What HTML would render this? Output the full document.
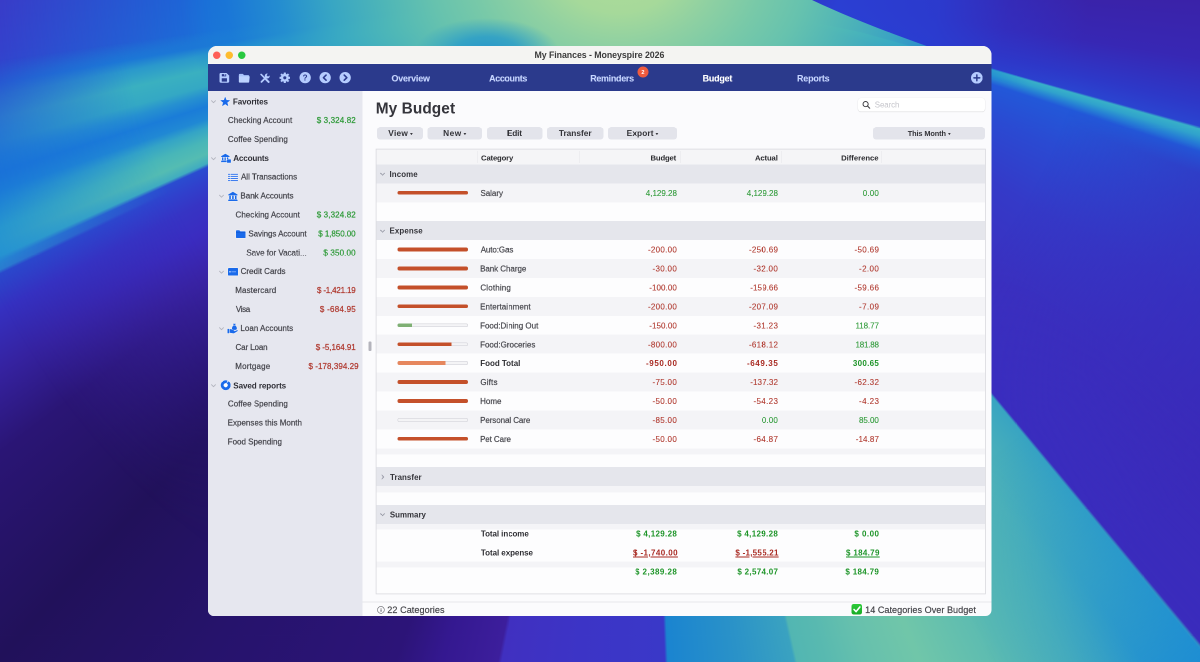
<!DOCTYPE html><html lang="en"><head><meta charset="utf-8"><title>My Finances - Moneyspire 2026</title><style>
*{box-sizing:border-box;margin:0;padding:0}
html,body{width:1200px;height:662px;overflow:hidden}
body{position:relative;font-family:"Liberation Sans",sans-serif;background:#3a30c0}
#stage{position:absolute;left:0;top:0;width:2400px;height:1324px;transform:scale(.5);transform-origin:0 0;will-change:transform;overflow:hidden}
#z{position:absolute;left:0;top:0;width:1200px;height:662px;zoom:2;overflow:hidden}
#bg,#bg2,#bg3,#bg4,#bg5,#bg6,#bg7{position:absolute;left:0;top:0;width:1200px;height:662px}

#bg{background:conic-gradient(from 0deg at 640px -30px,
 #3a22a8 0deg,#3a22a8 93deg,#3727b4 99deg,#2d38c8 103.5deg,#2a44d0 105.6deg,
 #38b0c8 105.85deg,#30a2cc 106.5deg,#2680d4 107.2deg,#2258d8 108deg,#2a4ad2 113deg,#343ac8 121deg,#3a30c0 131deg,#3a2ec0 140.2deg,
 #38a4c2 140.45deg,#44acbc 143deg,#50b4b6 146deg,#5abab2 152deg,#70c6a9 158deg,#66c0ad 162deg,#58b9b0 165deg,#52b6b2 167.2deg,
 #3aa2c0 167.45deg,#2a92c8 172deg,#1a84d0 177.7deg,
 #3a38c8 177.95deg,#3c34c6 185deg,#4030c0 191.3deg,
 #3c1e9c 191.6deg,#341890 196deg,#2c1478 199.5deg,#26136c 212deg,#21115a 223deg,
 #2a1575 233deg,#3522a0 238deg,#3530c0 242deg,#2a48cc 244.6deg,
 #2a80d0 244.9deg,#2290d4 246deg,#2090d4 248deg,#1a7cd8 250deg,#1a70d8 252deg,#1a6cd8 253.5deg,#2060d8 256deg,#2a4cd0 259deg,#3540cc 263deg,#3a3ac8 267.3deg,#3a3ac8 360deg)}
#bg2{background:conic-gradient(from 0deg at 640px -30px,
 transparent 0deg,transparent 215deg,
 #2a1678 225deg,#3a24a8 235deg,#3a2cc0 239deg,#3634c4 242deg,#3040cc 244deg,#2a4cd0 245.5deg,
 #40acc0 245.9deg,#54bcb2 247deg,#48b6b8 248.5deg,#34a4c6 250deg,#2088d4 251deg,#1a7cd8 252.5deg,#2690d0 253.9deg,#34a8c4 255deg,#3ab0c0 257deg,#2a98cc 258.9deg,#1c78d6 260deg,rgba(26,112,216,0) 262deg,transparent 276deg);
 -webkit-mask-image:radial-gradient(circle at 640px -30px,#000 0,#000 520px,transparent 720px);
 mask-image:radial-gradient(circle at 640px -30px,#000 0,#000 520px,transparent 720px)}
#bg4{background:radial-gradient(circle at 640px -30px,rgba(42,68,212,0) 0,rgba(42,68,212,0) 120px,rgba(42,64,212,.95) 200px,rgba(42,60,208,.9) 300px,rgba(46,52,200,.45) 370px,rgba(58,40,180,0) 450px);
 clip-path:polygon(700px -10px,1210px -10px,1210px 131px,991px 68px,900px 40px,700px 0px)}
#bg3{background:radial-gradient(ellipse 72px 34px at 487px 52px,rgba(34,146,206,.92) 0,rgba(38,154,202,.8) 45%,rgba(60,170,190,0) 100%),radial-gradient(ellipse 440px 330px at 618px -30px,#aedb98 0,#a6d99a 13%,#8ed0a2 23%,#78c9a8 33%,#66c2ae 43%,rgba(80,184,182,.97) 54%,rgba(58,170,194,.93) 66%,rgba(38,148,206,.8) 78%,rgba(26,128,214,.45) 90%,rgba(26,110,216,0) 100%);
 clip-path:path('M -10 -10 L 806 -10 L 812 0 C 850 18 890 33 921 44 C 950 54 970 61 991 68 L 1210 131 L 1210 143 L 991 78 L 900 56 L 900 300 L -10 300 Z')}

#bg5{background:conic-gradient(from 0deg at 640px -30px,transparent 0deg,transparent 257deg,rgba(28,120,214,0) 258.5deg,#1c78d6 260.5deg,#1a70d8 262deg,#1a6ad8 267deg,#1a6ad8 275deg,transparent 276deg);
 -webkit-mask-image:radial-gradient(circle at 640px -30px,#000 0,#000 430px,transparent 650px);
 mask-image:radial-gradient(circle at 640px -30px,#000 0,#000 430px,transparent 650px)}

#bg6{background:radial-gradient(circle at 640px -30px,rgba(30,146,210,0) 0,rgba(30,146,210,0) 600px,rgba(28,142,212,.5) 760px,rgba(24,136,214,.9) 920px);
 -webkit-mask-image:conic-gradient(from 0deg at 640px -30px,transparent 0deg,transparent 140.3deg,#000 140.5deg,#000 144deg,rgba(0,0,0,.45) 148deg,transparent 153deg,transparent 360deg);
 mask-image:conic-gradient(from 0deg at 640px -30px,transparent 0deg,transparent 140.3deg,#000 140.5deg,#000 144deg,rgba(0,0,0,.45) 148deg,transparent 153deg,transparent 360deg)}

#bg7{background:radial-gradient(circle at 640px -30px,rgba(58,40,184,0) 0,rgba(58,40,184,0) 450px,rgba(58,40,184,.5) 600px,rgba(58,38,180,.7) 760px);
 -webkit-mask-image:conic-gradient(from 0deg at 640px -30px,transparent 0deg,transparent 107.6deg,#000 110deg,#000 128deg,rgba(0,0,0,.4) 140.2deg,transparent 140.3deg,transparent 360deg);
 mask-image:conic-gradient(from 0deg at 640px -30px,transparent 0deg,transparent 107.6deg,#000 110deg,#000 128deg,rgba(0,0,0,.4) 140.2deg,transparent 140.3deg,transparent 360deg)}

#win{position:absolute;left:208px;top:46px;width:783.5px;height:569.8px;border-radius:9px 9px 6px 6px;overflow:hidden;background:#fbfbfd}
#in{position:absolute;left:-208px;top:-46px;width:1200px;height:662px}
#tb{position:absolute;left:208px;top:46px;width:784px;height:18.3px;background:#f4f4f2}
#nav{position:absolute;left:208px;top:64.2px;width:784px;height:26.9px;background:#2b3a8c}
#side{position:absolute;left:208px;top:91px;width:154.5px;height:530px;background:#e6e7ef}
.t{position:absolute;white-space:nowrap;line-height:1;transform:translateY(-50%)}
.b{font-weight:bold}
.dot{position:absolute;border-radius:50%}
.nv{font-size:8.9px;font-weight:bold;color:#c6d5ff;-webkit-text-stroke:.12px}
.sb{font-size:8px;color:#45454c;-webkit-text-stroke:.2px}
.sh{font-size:8.1px;font-weight:bold;color:#2f2f36}
.am{font-size:8px;-webkit-text-stroke:.22px}
.btn{position:absolute;height:12.4px;background:#e3e4eb;border-radius:3px}
.bt{font-size:8.3px;font-weight:bold;color:#333338}
.row{position:absolute;left:376.3px;width:608.6px}
.cell{font-size:8px;color:#47474d;-webkit-text-stroke:.18px}
.cb{font-size:8px;font-weight:bold;color:#2e2e33}
.hd{font-size:7.7px;font-weight:bold;color:#2c2c30}
.bar{position:absolute;height:3.8px;border-radius:2px;overflow:hidden;background:#f4f4f6;box-shadow:inset 0 0 0 .6px #d4d4da}
.bar i{position:absolute;left:0;top:0;height:100%;display:block}
.chev{position:absolute;width:6px;height:6px}
.ic{position:absolute}
.g{color:#2e9a38}.rd{color:#b0392f}
.cell.g,.cell.rd{-webkit-text-stroke:.1px}
.cb.g{color:#1d9428}.cb.rd{color:#a82a22}
</style></head><body>
<div id="stage"><div id="z">
<div id="bg"></div><div id="bg5"></div><div id="bg2"></div><div id="bg4"></div><div id="bg3"></div><div id="bg6"></div><div id="bg7"></div>
<div id="win"><div id="in">
<div id="tb"></div><div style="position:absolute;left:208px;top:63.5px;width:784px;height:.7px;background:#fbfbfa"></div>
<div class="dot" style="left:212.95px;top:51.45px;width:7.5px;height:7.5px;background:#fe5f57"></div>
<div class="dot" style="left:225.45px;top:51.45px;width:7.5px;height:7.5px;background:#febc2e"></div>
<div class="dot" style="left:238.05px;top:51.45px;width:7.5px;height:7.5px;background:#28c840"></div>
<div class="t b" style="left:534.45px;letter-spacing:-0.057px;top:55.6px;font-size:8.8px;color:#3b3b3b">My Finances - Moneyspire 2026</div>
<div id="nav"></div>
<svg class="ic" style="left:219.60px;top:73.15px;width:9.7px;height:9.7px" viewBox="0 0 10 10"><path d="M1.3 0 H7.3 L10 2.7 V8.7 Q10 10 8.7 10 H1.3 Q0 10 0 8.7 V1.3 Q0 0 1.3 0Z" fill="#b5ccff"/><path d="M2.4 1.1 H6.9 V3.5 H2.4Z" fill="#2b3a8c"/><rect x="4.9" y="1.1" width="1.1" height="1.7" fill="#b5ccff"/><path d="M2.3 5.4 H7.7 V8.9 H2.3Z" fill="#2b3a8c"/></svg>
<svg class="ic" style="left:238.70px;top:73.40px;width:11.4px;height:9.4px" viewBox="0 0 12 10"><path d="M.3 1.4 Q.3 .4 1.3 .4 H4.6 L5.8 1.7 H10.4 Q11.3 1.7 11.3 2.6 V3.4 H.3Z" fill="#a9c3fb"/><path d="M.3 3 H11.4 Q11.9 3 11.85 3.5 L11.3 8.9 Q11.2 9.7 10.4 9.7 H1.3 Q.4 9.7 .3 8.9Z" fill="#bdd3ff"/></svg>
<svg class="ic" style="left:259.90px;top:73.30px;width:9.9px;height:9.6px" viewBox="0 0 10 10"><path d="M1 1 L4.4 4.4" stroke="#b5ccff" stroke-width="1.7" stroke-linecap="round"/><path d="M5.9 5.9 L8.8 8.8" stroke="#b5ccff" stroke-width="2.1" stroke-linecap="round"/><path d="M1.4 8.7 L6.8 3.3" stroke="#b5ccff" stroke-width="1.9" stroke-linecap="round"/><path d="M9.9 2.1 A2.6 2.6 0 1 1 7.9 .1 L6.7 1.9 L8.1 3.3Z" fill="#b5ccff"/></svg>
<svg class="ic" style="left:279.50px;top:72.50px;width:10.6px;height:10.6px" viewBox="0 0 12 12"><path d="M5.08 0.17 L6.92 0.17 L7.00 1.82 L8.25 2.33 L9.47 1.23 L10.77 2.53 L9.67 3.75 L10.18 5.00 L11.83 5.08 L11.83 6.92 L10.18 7.00 L9.67 8.25 L10.77 9.47 L9.47 10.77 L8.25 9.67 L7.00 10.18 L6.92 11.83 L5.08 11.83 L5.00 10.18 L3.75 9.67 L2.53 10.77 L1.23 9.47 L2.33 8.25 L1.82 7.00 L0.17 6.92 L0.17 5.08 L1.82 5.00 L2.33 3.75 L1.23 2.53 L2.53 1.23 L3.75 2.33 L5.00 1.82Z" fill="#b5ccff" stroke="#b5ccff" stroke-width=".5" stroke-linejoin="round"/><circle cx="6" cy="6" r="1.75" fill="#2b3a8c"/></svg>
<svg class="ic" style="left:299.55px;top:72.10px;width:11.3px;height:11.3px" viewBox="0 0 12 12"><circle cx="6" cy="6" r="6" fill="#b5ccff"/><text x="6" y="9.1" text-anchor="middle" font-family="Liberation Sans,sans-serif" font-weight="bold" font-size="8.6" fill="#2b3a8c">?</text></svg>
<svg class="ic" style="left:319.55px;top:72.10px;width:11.3px;height:11.3px" viewBox="0 0 12 12"><circle cx="6" cy="6" r="6" fill="#b5ccff"/><path d="M7 3.3 L4.2 6 L7 8.7" fill="none" stroke="#2b3a8c" stroke-width="1.7" stroke-linecap="round" stroke-linejoin="round"/></svg>
<svg class="ic" style="left:339.65px;top:72.10px;width:11.3px;height:11.3px" viewBox="0 0 12 12"><circle cx="6" cy="6" r="6" fill="#b5ccff"/><path d="M5 3.3 L7.8 6 L5 8.7" fill="none" stroke="#2b3a8c" stroke-width="1.7" stroke-linecap="round" stroke-linejoin="round"/></svg>
<svg class="ic" style="left:970.95px;top:72.05px;width:11.7px;height:11.7px" viewBox="0 0 12 12"><circle cx="6" cy="6" r="6" fill="#b5ccff"/><path d="M6 3 V9 M3 6 H9" stroke="#2b3a8c" stroke-width="1.5" stroke-linecap="round"/></svg>
<div class="t nv" style="left:391.47px;letter-spacing:-0.155px;top:79.1px;">Overview</div>
<div class="t nv" style="left:489.11px;letter-spacing:-0.329px;top:79.1px;">Accounts</div>
<div class="t nv" style="left:590.19px;letter-spacing:-0.260px;top:79.1px;">Reminders</div>
<div class="t nv" style="left:702.64px;letter-spacing:-0.190px;top:79.1px;color:#fff">Budget</div>
<div class="t nv" style="left:797.04px;letter-spacing:-0.168px;top:79.1px;">Reports</div>
<div class="dot" style="left:637.4px;top:66.4px;width:11.2px;height:11.2px;background:#ee5b3e"></div>
<div class="t b" style="left:641.43px;top:72.3px;font-size:5.6px;color:#fff">2</div>
<div id="side"></div>
<div style="position:absolute;left:368.3px;top:341.7px;width:3.2px;height:9.3px;background:#b4b4bc;border-radius:1px"></div>
<svg class="chev" style="left:210.70px;top:98.60px" viewBox="0 0 6 6"><path d="M1 2.2 L3 4.2 L5 2.2" fill="none" stroke="#b2b4be" stroke-width=".9" stroke-linecap="round" stroke-linejoin="round"/></svg>
<svg class="ic" style="left:220.70px;top:97.20px;width:9.4px;height:9.4px;filter:drop-shadow(0 0 .8px rgba(255,255,255,.9))" viewBox="0 0 10 10"><path d="M5.00 0.25 L6.26 3.51 L9.76 3.70 L7.04 5.91 L7.94 9.30 L5.00 7.40 L2.06 9.30 L2.96 5.91 L0.24 3.70 L3.74 3.51Z" fill="#1a6aea" stroke="#1a6aea" stroke-width=".5" stroke-linejoin="round"/></svg>
<div class="t sh" style="left:232.89px;letter-spacing:-0.110px;top:101.4px;">Favorites</div>
<div class="t sb" style="left:227.93px;letter-spacing:0.018px;top:120.32px;">Checking Account</div>
<div class="t am g" style="left:316.70px;letter-spacing:0.135px;top:120.32px;">$ 3,324.82</div>
<div class="t sb" style="left:227.93px;letter-spacing:0.033px;top:139.25px;">Coffee Spending</div>
<svg class="chev" style="left:210.70px;top:155.38px" viewBox="0 0 6 6"><path d="M1 2.2 L3 4.2 L5 2.2" fill="none" stroke="#b2b4be" stroke-width=".9" stroke-linecap="round" stroke-linejoin="round"/></svg>
<svg class="ic" style="left:220.80px;top:153.67px;width:10px;height:9.4px;filter:drop-shadow(0 0 .8px rgba(255,255,255,.9))" viewBox="0 0 10.6 10"><path d="M4.6 .3 L9 2.8 V3.7 H.2 V2.8Z" fill="#1a6aea"/><path d="M1.1 4.1 H2.5 V7 H1.1Z M3.7 4.1 H5.1 V7 H3.7Z M6.3 4.1 H7.7 V6 H6.3Z" fill="#1a6aea"/><path d="M.5 7.4 H6 V8.2 H6 V9.2 H0 V8.2 H.5Z" fill="#1a6aea"/><rect x="6.4" y="6.3" width="4.1" height="3.6" rx=".5" fill="#1a6aea"/></svg>
<div class="t sh" style="left:233.27px;letter-spacing:-0.179px;top:158.17px;">Accounts</div>
<svg class="ic" style="left:228.00px;top:173.70px;width:10px;height:7.6px;filter:drop-shadow(0 0 .8px rgba(255,255,255,.9))" viewBox="0 0 10 7.7"><rect x="0" y="0.35" width="1.9" height="1.0" fill="#3577ee"/><rect x="2.5" y="0.35" width="7.5" height="1.0" fill="#3577ee"/><rect x="0" y="2.45" width="1.9" height="1.0" fill="#3577ee"/><rect x="2.5" y="2.45" width="7.5" height="1.0" fill="#3577ee"/><rect x="0" y="4.55" width="1.9" height="1.0" fill="#3577ee"/><rect x="2.5" y="4.55" width="7.5" height="1.0" fill="#3577ee"/><rect x="0" y="6.65" width="1.9" height="1.0" fill="#3577ee"/><rect x="2.5" y="6.65" width="7.5" height="1.0" fill="#3577ee"/></svg>
<div class="t sb" style="left:241.00px;letter-spacing:-0.024px;top:177.1px;">All Transactions</div>
<svg class="chev" style="left:218.70px;top:193.23px" viewBox="0 0 6 6"><path d="M1 2.2 L3 4.2 L5 2.2" fill="none" stroke="#b2b4be" stroke-width=".9" stroke-linecap="round" stroke-linejoin="round"/></svg>
<svg class="ic" style="left:228.20px;top:191.32px;width:9.8px;height:9.8px;filter:drop-shadow(0 0 .8px rgba(255,255,255,.9))" viewBox="0 0 10 10"><path d="M5 .3 L9.7 3 V3.9 H.3 V3Z" fill="#1a6aea"/><path d="M1.3 4.3 H2.9 V7.7 H1.3Z M4.2 4.3 H5.8 V7.7 H4.2Z M7.1 4.3 H8.7 V7.7 H7.1Z" fill="#1a6aea"/><path d="M.6 8.1 H9.4 V8.9 H9.9 V9.8 H.1 V8.9 H.6Z" fill="#1a6aea"/></svg>
<div class="t sb" style="left:240.38px;letter-spacing:0.018px;top:196.03px;">Bank Accounts</div>
<div class="t sb" style="left:235.53px;letter-spacing:0.018px;top:214.95px;">Checking Account</div>
<div class="t am g" style="left:316.70px;letter-spacing:0.135px;top:214.95px;">$ 3,324.82</div>
<svg class="ic" style="left:235.90px;top:229.87px;width:9.6px;height:8.2px;filter:drop-shadow(0 0 .8px rgba(255,255,255,.9))" viewBox="0 0 10 8.5"><path d="M0 1 Q0 .2 .8 .2 H3.4 L4.6 1.4 H9.2 Q10 1.4 10 2.2 V7.6 Q10 8.4 9.2 8.4 H.8 Q0 8.4 0 7.6Z" fill="#1a6aea"/><path d="M0 2.7 H10" stroke="#0f56cf" stroke-width=".6"/></svg>
<div class="t sb" style="left:248.35px;letter-spacing:-0.062px;top:233.87px;">Savings Account</div>
<div class="t am g" style="left:318.30px;letter-spacing:-0.057px;top:233.87px;">$ 1,850.00</div>
<div class="t sb" style="left:246.35px;top:252.8px;">Save for Vacati...</div>
<div class="t am g" style="left:323.40px;letter-spacing:0.151px;top:252.8px;">$ 350.00</div>
<svg class="chev" style="left:218.70px;top:268.93px" viewBox="0 0 6 6"><path d="M1 2.2 L3 4.2 L5 2.2" fill="none" stroke="#b2b4be" stroke-width=".9" stroke-linecap="round" stroke-linejoin="round"/></svg>
<svg class="ic" style="left:228.00px;top:268.02px;width:10.2px;height:7.6px;filter:drop-shadow(0 0 .8px rgba(255,255,255,.9))" viewBox="0 0 10.2 7.6"><rect x="0" y="0" width="10.2" height="7.6" rx="1" fill="#1a6aea"/><rect x="1.2" y="3.2" width="1.5" height="1.2" fill="#d6e6ff"/><rect x="3.4" y="3.5" width="4.6" height=".7" fill="#9cc0ff"/></svg>
<div class="t sb" style="left:240.62px;top:271.73px;">Credit Cards</div>
<div class="t sb" style="left:235.28px;letter-spacing:0.096px;top:290.65px;">Mastercard</div>
<div class="t am rd" style="left:317.00px;letter-spacing:-0.175px;top:290.65px;">$ -1,421.19</div>
<div class="t sb" style="left:235.90px;letter-spacing:-0.356px;top:309.58px;">Visa</div>
<div class="t am rd" style="left:319.90px;letter-spacing:0.252px;top:309.58px;">$ -684.95</div>
<svg class="chev" style="left:218.70px;top:325.70px" viewBox="0 0 6 6"><path d="M1 2.2 L3 4.2 L5 2.2" fill="none" stroke="#b2b4be" stroke-width=".9" stroke-linecap="round" stroke-linejoin="round"/></svg>
<svg class="ic" style="left:227.70px;top:323.50px;width:10.6px;height:10px;filter:drop-shadow(0 0 .8px rgba(255,255,255,.9))" viewBox="0 0 10.6 10"><path d="M5.6 .3 H8.2 L7.7 1.5 H6.1Z" fill="#1a6aea"/><path d="M6 1.9 H7.8 Q9.6 3.6 9.3 5.4 Q9.1 6.4 8 6.4 H5.8 Q4.7 6.4 4.5 5.4 Q4.2 3.6 6 1.9Z" fill="#1a6aea"/><rect x="0" y="5.4" width="1.7" height="4.3" rx=".3" fill="#1a6aea"/><path d="M2.2 5.8 Q3.6 5.3 4.6 6.2 L6.6 6.9 Q7.2 7.2 6.9 7.8 L9.4 6.8 Q10.4 6.6 10.4 7.4 L6.8 9.6 Q6.2 9.9 5.4 9.8 L2.2 9.3Z" fill="#1a6aea"/></svg>
<div class="t sb" style="left:240.38px;letter-spacing:0.021px;top:328.5px;">Loan Accounts</div>
<div class="t sb" style="left:235.53px;letter-spacing:-0.119px;top:347.43px;">Car Loan</div>
<div class="t am rd" style="left:315.70px;letter-spacing:-0.045px;top:347.43px;">$ -5,164.91</div>
<div class="t sb" style="left:235.28px;letter-spacing:0.165px;top:366.35px;">Mortgage</div>
<div class="t am rd" style="left:308.50px;letter-spacing:0.062px;top:366.35px;">$ -178,394.29</div>
<svg class="chev" style="left:210.70px;top:382.48px" viewBox="0 0 6 6"><path d="M1 2.2 L3 4.2 L5 2.2" fill="none" stroke="#b2b4be" stroke-width=".9" stroke-linecap="round" stroke-linejoin="round"/></svg>
<svg class="ic" style="left:220.30px;top:380.18px;width:10.4px;height:10.4px" viewBox="0 0 10.4 10.4"><circle cx="5.2" cy="5.2" r="5.2" fill="#fff"/><circle cx="5.2" cy="5.2" r="3.5" fill="none" stroke="#1a6aea" stroke-width="2.9" stroke-dasharray="21.2 .8" transform="rotate(-58 5.2 5.2)"/></svg>
<div class="t sh" style="left:233.27px;letter-spacing:-0.089px;top:385.28px;">Saved reports</div>
<div class="t sb" style="left:227.93px;letter-spacing:0.033px;top:404.2px;">Coffee Spending</div>
<div class="t sb" style="left:227.68px;top:423.13px;">Expenses this Month</div>
<div class="t sb" style="left:227.68px;top:442.05px;">Food Spending</div>
<div class="t b" style="left:375.74px;letter-spacing:0.079px;top:108.6px;font-size:15.4px;color:#34343b">My Budget</div>
<div style="position:absolute;left:858px;top:98px;width:127px;height:13.3px;background:#fff;border-radius:3px;box-shadow:0 .5px 1px rgba(0,0,0,.13),0 0 0 .4px rgba(0,0,0,.04)"></div>
<svg class="ic" style="left:861.8px;top:100.6px;width:8.6px;height:8.6px" viewBox="0 0 10 10"><circle cx="4.2" cy="4.2" r="3" fill="none" stroke="#3a3a3e" stroke-width="1.1"/><path d="M6.5 6.5 L9 9" stroke="#3a3a3e" stroke-width="1.2" stroke-linecap="round"/></svg>
<div class="t " style="left:874.75px;letter-spacing:-0.068px;top:105.2px;font-size:7.9px;color:#c4c4ca">Search</div>
<div class="btn" style="left:377px;top:127px;width:46px"></div>
<div class="t bt" style="left:388.30px;letter-spacing:0.269px;top:133.6px;">View</div>
<svg class="ic" style="left:410.10px;top:132.9px;width:2.8px;height:2.2px" viewBox="0 0 3 2.4"><path d="M0 0 H3 L1.5 2.4Z" fill="#3a3a40"/></svg>
<div class="btn" style="left:427.4px;top:127px;width:54.4px"></div>
<div class="t bt" style="left:443.18px;letter-spacing:0.512px;top:133.6px;">New</div>
<svg class="ic" style="left:463.50px;top:132.9px;width:2.8px;height:2.2px" viewBox="0 0 3 2.4"><path d="M0 0 H3 L1.5 2.4Z" fill="#3a3a40"/></svg>
<div class="btn" style="left:487px;top:127px;width:55.3px"></div>
<div class="t bt" style="left:506.83px;letter-spacing:-0.172px;top:133.6px;">Edit</div>
<div class="btn" style="left:547px;top:127px;width:56.3px"></div>
<div class="t bt" style="left:558.85px;letter-spacing:-0.005px;top:133.6px;">Transfer</div>
<div class="btn" style="left:608px;top:127px;width:69px"></div>
<div class="t bt" style="left:626.68px;letter-spacing:0.115px;top:133.6px;">Export</div>
<svg class="ic" style="left:655.70px;top:132.9px;width:2.8px;height:2.2px" viewBox="0 0 3 2.4"><path d="M0 0 H3 L1.5 2.4Z" fill="#3a3a40"/></svg>
<div class="btn" style="left:873px;top:127px;width:112px"></div>
<div class="t bt" style="left:907.70px;letter-spacing:-0.093px;top:133.6px;font-size:7.35px">This Month</div>
<svg class="ic" style="left:947.90px;top:132.9px;width:2.8px;height:2.2px" viewBox="0 0 3 2.4"><path d="M0 0 H3 L1.5 2.4Z" fill="#3a3a40"/></svg>
<div style="position:absolute;left:376.3px;top:149.7px;width:608.6px;height:443.8px;background:#fdfdfe;box-shadow:0 0 0 .8px #d9d9de"></div>
<div class="row" style="top:149.7px;height:14.7px;background:#f5f5f7"></div>
<div style="position:absolute;left:477.5px;top:151.2px;width:.7px;height:11.7px;background:#e4e4e9"></div>
<div style="position:absolute;left:578.8px;top:151.2px;width:.7px;height:11.7px;background:#e4e4e9"></div>
<div style="position:absolute;left:679.9px;top:151.2px;width:.7px;height:11.7px;background:#e4e4e9"></div>
<div style="position:absolute;left:780.8px;top:151.2px;width:.7px;height:11.7px;background:#e4e4e9"></div>
<div style="position:absolute;left:881.3px;top:151.2px;width:.7px;height:11.7px;background:#e4e4e9"></div>
<div class="t hd" style="left:481.06px;letter-spacing:-0.169px;top:158.1px;">Category</div>
<div class="t hd" style="left:650.52px;letter-spacing:-0.160px;top:158.1px;">Budget</div>
<div class="t hd" style="left:754.98px;letter-spacing:-0.131px;top:158.1px;">Actual</div>
<div class="t hd" style="left:841.12px;letter-spacing:-0.021px;top:158.1px;">Difference</div>
<div class="row" style="top:164.40px;height:18.93px;background:#e5e6ec"></div>
<svg class="chev" style="left:379.60px;top:171.06px" viewBox="0 0 6 6"><path d="M1 2.2 L3 4.2 L5 2.2" fill="none" stroke="#9a9ca8" stroke-width=".9" stroke-linecap="round" stroke-linejoin="round"/></svg>
<div class="t hd" style="left:389.51px;letter-spacing:0.107px;top:174.46px;font-size:7.9px;color:#34343a">Income</div>
<div class="row" style="top:183.33px;height:18.93px;background:#f4f4f7"></div>
<div class="bar" style="left:397.5px;top:190.89px;width:70.4px"><i style="width:100.0%;background:#c4502a"></i></div>
<div class="t cell" style="left:480.45px;letter-spacing:-0.025px;top:193.39px;">Salary</div>
<div class="t cell g" style="left:645.77px;top:193.39px;">4,129.28</div>
<div class="t cell g" style="left:746.77px;top:193.39px;">4,129.28</div>
<div class="t cell g" style="left:862.75px;letter-spacing:0.160px;top:193.39px;">0.00</div>
<div class="row" style="top:221.18px;height:18.93px;background:#e5e6ec"></div>
<svg class="chev" style="left:379.60px;top:227.84px" viewBox="0 0 6 6"><path d="M1 2.2 L3 4.2 L5 2.2" fill="none" stroke="#9a9ca8" stroke-width=".9" stroke-linecap="round" stroke-linejoin="round"/></svg>
<div class="t hd" style="left:389.51px;letter-spacing:0.116px;top:231.24px;font-size:7.9px;color:#34343a">Expense</div>
<div class="bar" style="left:397.5px;top:247.66px;width:70.4px"><i style="width:100.0%;background:#c4502a"></i></div>
<div class="t cell" style="left:480.70px;letter-spacing:-0.100px;top:250.16px;">Auto:Gas</div>
<div class="t cell rd" style="left:647.95px;letter-spacing:0.286px;top:250.16px;">-200.00</div>
<div class="t cell rd" style="left:748.95px;letter-spacing:0.307px;top:250.16px;">-250.69</div>
<div class="t cell rd" style="left:854.45px;letter-spacing:0.358px;top:250.16px;">-50.69</div>
<div class="row" style="top:259.02px;height:18.93px;background:#f4f4f7"></div>
<div class="bar" style="left:397.5px;top:266.59px;width:70.4px"><i style="width:100.0%;background:#c4502a"></i></div>
<div class="t cell" style="left:480.07px;letter-spacing:-0.045px;top:269.09px;">Bank Charge</div>
<div class="t cell rd" style="left:652.45px;letter-spacing:0.333px;top:269.09px;">-30.00</div>
<div class="t cell rd" style="left:753.45px;letter-spacing:0.333px;top:269.09px;">-32.00</div>
<div class="t cell rd" style="left:859.05px;letter-spacing:0.379px;top:269.09px;">-2.00</div>
<div class="bar" style="left:397.5px;top:285.51px;width:70.4px"><i style="width:100.0%;background:#c4502a"></i></div>
<div class="t cell" style="left:480.32px;letter-spacing:0.168px;top:288.01px;">Clothing</div>
<div class="t cell rd" style="left:649.25px;letter-spacing:0.069px;top:288.01px;">-100.00</div>
<div class="t cell rd" style="left:750.25px;letter-spacing:0.090px;top:288.01px;">-159.66</div>
<div class="t cell rd" style="left:854.45px;letter-spacing:0.358px;top:288.01px;">-59.66</div>
<div class="row" style="top:296.88px;height:18.93px;background:#f4f4f7"></div>
<div class="bar" style="left:397.5px;top:304.44px;width:70.4px"><i style="width:100.0%;background:#c4502a"></i></div>
<div class="t cell" style="left:480.07px;letter-spacing:0.058px;top:306.94px;">Entertainment</div>
<div class="t cell rd" style="left:647.95px;letter-spacing:0.286px;top:306.94px;">-200.00</div>
<div class="t cell rd" style="left:748.95px;letter-spacing:0.307px;top:306.94px;">-207.09</div>
<div class="t cell rd" style="left:859.05px;letter-spacing:0.410px;top:306.94px;">-7.09</div>
<div class="bar" style="left:397.5px;top:323.36px;width:70.4px"><i style="width:20.8%;background:#7fb074"></i></div>
<div class="t cell" style="left:480.07px;top:325.86px;">Food:Dining Out</div>
<div class="t cell rd" style="left:649.25px;letter-spacing:0.069px;top:325.86px;">-150.00</div>
<div class="t cell rd" style="left:753.45px;letter-spacing:0.358px;top:325.86px;">-31.23</div>
<div class="t cell g" style="left:855.50px;letter-spacing:-0.090px;top:325.86px;">118.77</div>
<div class="row" style="top:334.73px;height:18.93px;background:#f4f4f7"></div>
<div class="bar" style="left:397.5px;top:342.29px;width:70.4px"><i style="width:77.0%;background:#c4502a"></i></div>
<div class="t cell" style="left:480.07px;letter-spacing:0.011px;top:344.79px;">Food:Groceries</div>
<div class="t cell rd" style="left:647.95px;letter-spacing:0.286px;top:344.79px;">-800.00</div>
<div class="t cell rd" style="left:748.95px;letter-spacing:0.307px;top:344.79px;">-618.12</div>
<div class="t cell g" style="left:855.50px;letter-spacing:-0.209px;top:344.79px;">181.88</div>
<div class="bar" style="left:397.5px;top:361.21px;width:70.4px"><i style="width:68.0%;background:#e6875e"></i></div>
<div class="t cb" style="left:480.20px;letter-spacing:-0.012px;top:363.71px;">Food Total</div>
<div class="t cb rd" style="left:645.96px;letter-spacing:0.638px;top:363.71px;">-950.00</div>
<div class="t cb rd" style="left:746.96px;letter-spacing:0.617px;top:363.71px;">-649.35</div>
<div class="t cb g" style="left:852.90px;letter-spacing:0.286px;top:363.71px;">300.65</div>
<div class="row" style="top:372.58px;height:18.93px;background:#f4f4f7"></div>
<div class="bar" style="left:397.5px;top:380.14px;width:70.4px"><i style="width:100.0%;background:#c4502a"></i></div>
<div class="t cell" style="left:480.32px;letter-spacing:0.170px;top:382.64px;">Gifts</div>
<div class="t cell rd" style="left:652.45px;letter-spacing:0.333px;top:382.64px;">-75.00</div>
<div class="t cell rd" style="left:750.25px;letter-spacing:0.090px;top:382.64px;">-137.32</div>
<div class="t cell rd" style="left:854.45px;letter-spacing:0.358px;top:382.64px;">-62.32</div>
<div class="bar" style="left:397.5px;top:399.06px;width:70.4px"><i style="width:100.0%;background:#c4502a"></i></div>
<div class="t cell" style="left:480.07px;letter-spacing:0.036px;top:401.56px;">Home</div>
<div class="t cell rd" style="left:652.45px;letter-spacing:0.333px;top:401.56px;">-50.00</div>
<div class="t cell rd" style="left:753.45px;letter-spacing:0.358px;top:401.56px;">-54.23</div>
<div class="t cell rd" style="left:859.05px;letter-spacing:0.410px;top:401.56px;">-4.23</div>
<div class="row" style="top:410.43px;height:18.93px;background:#f4f4f7"></div>
<div class="bar" style="left:397.5px;top:417.99px;width:70.4px"></div>
<div class="t cell" style="left:480.07px;letter-spacing:-0.074px;top:420.49px;">Personal Care</div>
<div class="t cell rd" style="left:652.45px;letter-spacing:0.333px;top:420.49px;">-85.00</div>
<div class="t cell g" style="left:761.75px;letter-spacing:0.160px;top:420.49px;">0.00</div>
<div class="t cell g" style="left:859.05px;letter-spacing:-0.068px;top:420.49px;">85.00</div>
<div class="bar" style="left:397.5px;top:436.91px;width:70.4px"><i style="width:100.0%;background:#c4502a"></i></div>
<div class="t cell" style="left:480.07px;letter-spacing:-0.089px;top:439.41px;">Pet Care</div>
<div class="t cell rd" style="left:652.45px;letter-spacing:0.333px;top:439.41px;">-50.00</div>
<div class="t cell rd" style="left:753.45px;letter-spacing:0.358px;top:439.41px;">-64.87</div>
<div class="t cell rd" style="left:855.75px;letter-spacing:0.098px;top:439.41px;">-14.87</div>
<div class="row" style="top:448.27px;height:6.2px;background:#f4f4f7"></div>
<div class="row" style="top:467.20px;height:18.93px;background:#e5e6ec"></div>
<svg class="chev" style="left:379.60px;top:473.86px" viewBox="0 0 6 6"><path d="M2.2 1 L4.2 3 L2.2 5" fill="none" stroke="#9a9ca8" stroke-width=".9" stroke-linecap="round" stroke-linejoin="round"/></svg>
<div class="t hd" style="left:390.00px;letter-spacing:0.062px;top:477.26px;font-size:7.9px;color:#34343a">Transfer</div>
<div class="row" style="top:486.12px;height:6.2px;background:#f4f4f7"></div>
<div class="row" style="top:505.05px;height:18.93px;background:#e5e6ec"></div>
<svg class="chev" style="left:379.60px;top:511.71px" viewBox="0 0 6 6"><path d="M1 2.2 L3 4.2 L5 2.2" fill="none" stroke="#9a9ca8" stroke-width=".9" stroke-linecap="round" stroke-linejoin="round"/></svg>
<div class="t hd" style="left:389.88px;letter-spacing:0.011px;top:515.11px;font-size:7.9px;color:#34343a">Summary</div>
<div class="row" style="top:523.98px;height:5.5px;background:#f4f4f7"></div>
<div class="t cb" style="left:480.90px;letter-spacing:-0.077px;top:534.04px;">Total income</div>
<div class="t cb g" style="left:636.10px;letter-spacing:0.321px;top:534.04px;">$ 4,129.28</div>
<div class="t cb g" style="left:737.10px;letter-spacing:0.321px;top:534.04px;">$ 4,129.28</div>
<div class="t cb g" style="left:854.40px;letter-spacing:0.456px;top:534.04px;">$ 0.00</div>
<div class="t cb" style="left:480.90px;letter-spacing:-0.055px;top:552.96px;">Total expense</div>
<div class="t cb rd" style="left:633.00px;letter-spacing:0.405px;top:552.96px;text-decoration:underline;text-decoration-thickness:.9px;text-underline-offset:1.1px">$ -1,740.00</div>
<div class="t cb rd" style="left:735.40px;letter-spacing:0.252px;top:552.96px;text-decoration:underline;text-decoration-thickness:.9px;text-underline-offset:1.1px">$ -1,555.21</div>
<div class="t cb g" style="left:846.00px;letter-spacing:0.323px;top:552.96px;text-decoration:underline;text-decoration-thickness:.9px;text-underline-offset:1.1px">$ 184.79</div>
<div class="row" style="top:561.33px;height:6.0px;background:#f4f4f7"></div>
<div class="t cb g" style="left:635.00px;letter-spacing:0.443px;top:571.89px;">$ 2,389.28</div>
<div class="t cb g" style="left:737.40px;letter-spacing:0.301px;top:571.89px;">$ 2,574.07</div>
<div class="t cb g" style="left:845.40px;letter-spacing:0.323px;top:571.89px;">$ 184.79</div>
<div style="position:absolute;left:362.5px;top:601.6px;width:640px;height:.8px;background:#e6e6ea"></div>
<svg class="ic" style="left:377px;top:606px;width:7.8px;height:7.8px" viewBox="0 0 10 10"><circle cx="5" cy="5" r="4.4" fill="none" stroke="#6a6a70" stroke-width=".8"/><path d="M5 4.3 V7.4 M5 2.6 V3.2" stroke="#6a6a70" stroke-width="1"/></svg>
<div class="t " style="left:387.27px;letter-spacing:0.054px;top:610.2px;font-size:9.1px;color:#424247;-webkit-text-stroke:.15px">22 Categories</div>
<div style="position:absolute;left:851.4px;top:604.1px;width:10.8px;height:10.6px;border-radius:2.2px;background:linear-gradient(#2ccb38,#17ab25)"></div>
<svg class="ic" style="left:851.4px;top:604.1px;width:10.8px;height:10.6px" viewBox="0 0 10 10"><path d="M2.3 5.2 L4.2 7.2 L7.8 2.8" fill="none" stroke="#fff" stroke-width="1.5" stroke-linecap="round" stroke-linejoin="round"/></svg>
<div class="t " style="left:865.13px;letter-spacing:0.023px;top:610.2px;font-size:9.1px;color:#424247;-webkit-text-stroke:.15px">14 Categories Over Budget</div>
</div></div>
</div></div>
</body></html>
